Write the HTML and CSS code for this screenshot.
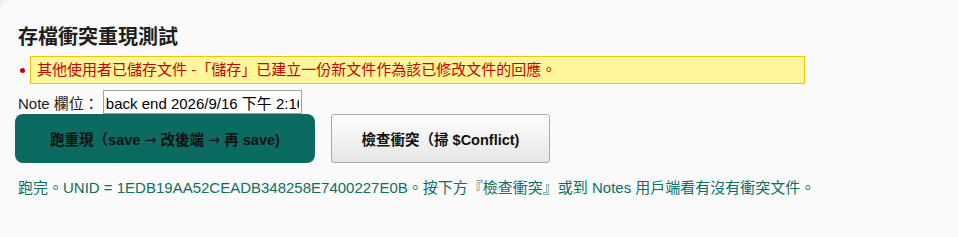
FILE: index.html
```html
<!DOCTYPE html>
<html lang="zh-Hant">
<head>
    <meta charset="UTF-8">
    <meta name="viewport" content="width=device-width, initial-scale=1.0">
    <title>存檔衝突重現測試</title>
    <link rel="stylesheet" href="styles.css">
</head>
<body>
    <div id="page">
        <h2 class="title">存檔衝突重現測試</h2>

        <div class="errors">
            <span class="dot"></span>
            <span class="errorText">其他使用者已儲存文件 -「儲存」已建立一份新文件作為該已修改文件的回應。</span>
        </div>

        <div class="noteRow">
            <label for="noteField">Note 欄位：</label>
            <input id="noteField" type="text" value="back end 2026/9/16 下午 2:10:42">
        </div>

        <div class="actions">
            <button id="runButton">跑重現（save <span class="arrow">→</span> 改後端 <span class="arrow">→</span> 再 save)</button>
            <button id="checkButton">檢查衝突（掃 $Conflict)</button>
        </div>

        <p id="result">跑完。UNID = 1EDB19AA52CEADB348258E7400227E0B。按下方『檢查衝突』或到 Notes 用戶端看有沒有衝突文件。</p>
    </div>
</body>
</html>
```

FILE: styles.css
```css
body {
	margin: 0;
	background: #ececec;
	font-family: "Liberation Sans", Arial, "Noto Sans CJK TC", sans-serif;
	font-size: 15px;
	color: #222;
}

#page {
	background: #fafafa;
	border-top-left-radius: 10px;
	min-height: 237px;
	padding: 25px 18px 0 18px;
	box-sizing: border-box;
}

.title {
	margin: 0;
	font-size: 20px;
	line-height: 24px;
	font-weight: bold;
	color: #1e1e1e;
}

.errors {
	display: flex;
	align-items: center;
	margin: 7px 0 0 2px;
}

.dot {
	width: 5px;
	height: 5px;
	border-radius: 50%;
	background: #cc0000;
	margin-right: 5px;
}

.errorText {
	display: block;
	box-sizing: border-box;
	width: 775px;
	height: 28px;
	line-height: 26px;
	padding: 0 6px;
	background: #fff799;
	border: 1px solid #f5c400;
	color: #cc0000;
	font-size: 15px;
}

.noteRow {
	display: flex;
	align-items: center;
	margin-top: 6px;
}

.noteRow label {
	margin-right: 4px;
}

.noteRow input {
	box-sizing: border-box;
	width: 199px;
	height: 24px;
	padding: 0 2px;
	border: 1px solid #a0a0a0;
	background: white;
	font-family: inherit;
	font-size: 15px;
	color: #000;
	outline: none;
}

.actions {
	display: flex;
	gap: 16px;
	margin-left: -3px;
}

button {
	height: 49px;
	font-family: inherit;
	font-size: 14.5px;
	font-weight: bold;
	color: #111;
	cursor: pointer;
}

.arrow {
	font-family: "DejaVu Sans", sans-serif;
	font-weight: normal;
}

#runButton {
	width: 300px;
	border: none;
	border-radius: 8px;
	background: #0c6b61;
}

#checkButton {
	width: 219px;
	border: 1px solid #aaa;
	border-radius: 3px;
	background: linear-gradient(#fdfdfd, #e6e6e6);
}

#result {
	margin: 15px 0 0 0;
	line-height: 20px;
	color: #0f6e64;
}
```
